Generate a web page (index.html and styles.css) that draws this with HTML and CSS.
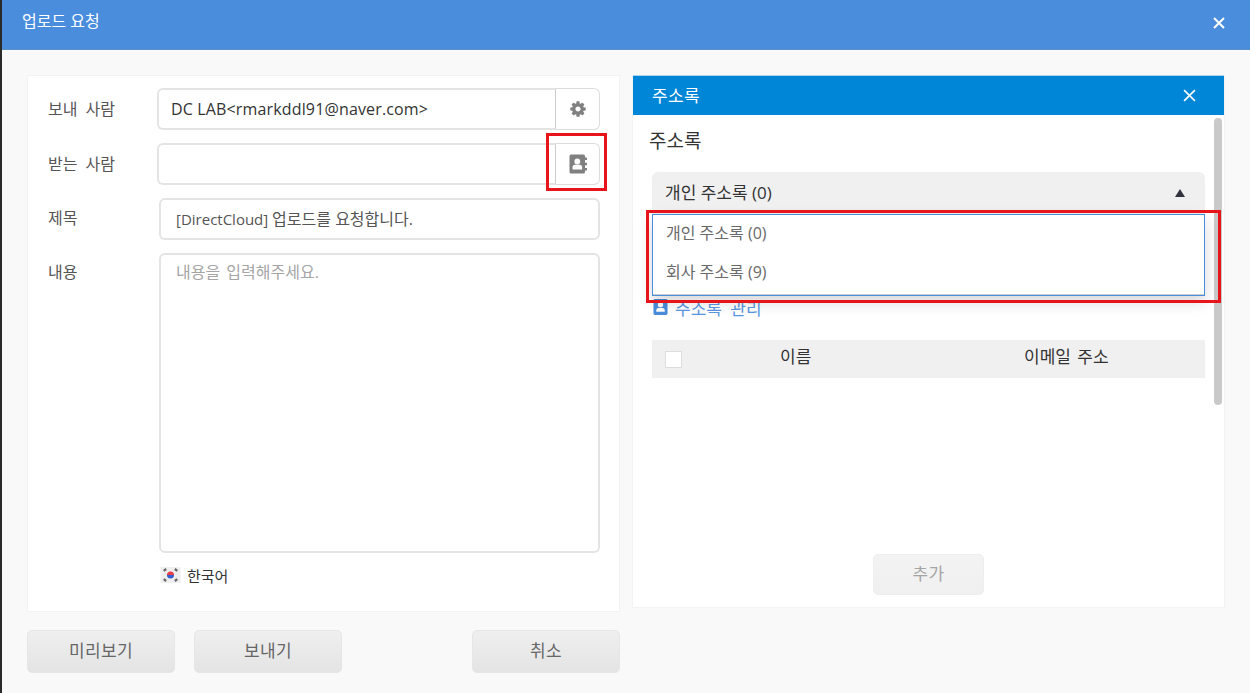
FILE: index.html
```html
<!DOCTYPE html>
<html lang="ko">
<head>
<meta charset="utf-8">
<title>업로드 요청</title>
<link rel="stylesheet" href="styles.css">
</head>
<body>
<div class="app">
  <header class="topbar">
    <span class="topbar-title">업로드 요청</span>
    <svg class="topbar-close" viewBox="0 0 12 12"><path d="M1 1L11 11M11 1L1 11"/></svg>
  </header>
  <main class="main">
    <div class="col-left">
      <section class="form-panel">
        <div class="row row-send">
          <label class="row-label">보내 사람</label>
          <div class="group">
            <div class="group-input">DC LAB&lt;rmarkddl91@naver.com&gt;</div>
            <div class="group-btn">
              <svg class="gear" viewBox="0 0 1792 1792"><path fill-rule="evenodd" d="M1152 896q0-106-75-181t-181-75-181 75-75 181 75 181 181 75 181-75 75-181zm512-109v222q0 12-8 23t-20 13l-185 28q-19 54-39 91 35 50 107 138 10 12 10 25t-9 23q-27 37-99 108t-94 71q-12 0-26-9l-138-108q-44 23-91 38-16 136-29 186-7 28-36 28h-222q-14 0-24.5-8.5t-11.5-21.5l-28-184q-49-16-90-37l-141 107q-10 9-25 9-14 0-25-11-126-114-165-168-7-10-7-23 0-12 8-23 15-21 51-66.5t54-70.5q-27-50-41-99l-183-27q-13-2-21-12.5t-8-23.5v-222q0-12 8-23t19-13l186-28q14-46 39-92-40-57-107-138-10-12-10-24 0-10 9-23 26-36 98.5-107.5t94.5-71.5q13 0 26 10l138 107q44-23 91-38 16-136 29-186 7-28 36-28h222q14 0 24.5 8.5t11.5 21.5l28 184q49 16 90 37l142-107q9-9 24-9 13 0 25 10 129 119 165 170 7 8 7 22 0 12-8 23-15 21-51 66.5t-54 70.5q26 50 41 98l183 28q13 2 21 12.5t8 23.5z"/></svg>
            </div>
          </div>
        </div>
        <div class="row row-recv">
          <label class="row-label">받는 사람</label>
          <div class="group">
            <div class="group-input"></div>
            <div class="group-btn">
              <svg class="book" viewBox="0 0 20 20"><path class="book-body" d="M3 0.5H15.5A1.5 1.5 0 0 1 17 2V18A1.5 1.5 0 0 1 15.5 19.5H3A1.5 1.5 0 0 1 1.500 18V2A1.500 1.500 0 0 1 3 0.500Z"/><path class="book-body" d="M16.500 3.500H19V6H16.500ZM16.500 8.700H19V11.200H16.500ZM16.500 14H19V16.500H16.500Z"/><circle class="book-person" cx="9.300" cy="7.500" r="2.900"/><path class="book-person" d="M4.500 15.500V13.500Q4.500 10.800 7 10.800H11.600Q14.100 10.800 14.100 13.500V15.500Z"/></svg>
            </div>
          </div>
        </div>
        <div class="row row-subject">
          <label class="row-label">제목</label>
          <div class="field">[DirectCloud] <span class="field-ko">업로드를 요청합니다.</span></div>
        </div>
        <div class="row row-body">
          <label class="row-label">내용</label>
          <div class="field field-area">내용을 입력해주세요.</div>
        </div>
        <div class="lang">
          <svg class="flag" viewBox="0 0 20 16">
            <rect width="20" height="16" fill="#efefef"/>
            <path d="M10 4.500A3.500 3.500 0 0 1 10 11.500Z" fill="#2f5fd0" transform="rotate(90 10 8)"/>
            <path d="M10 4.500A3.500 3.500 0 0 0 10 11.500Z" fill="#ee3c46" transform="rotate(90 10 8)"/>
            <path d="M3.200 3.800L5.700 2M14.300 2L16.800 3.800M3.200 12.200L5.700 14M14.300 14L16.800 12.200" stroke="#666" stroke-width="2.200"/>
          </svg>
          <span class="lang-name">한국어</span>
        </div>
      </section>
      <div class="actions">
        <button class="btn">미리보기</button>
        <button class="btn">보내기</button>
        <button class="btn btn-cancel">취소</button>
      </div>
    </div>
    <section class="book-panel">
      <div class="book-head">
        <span>주소록</span>
        <svg class="book-close" viewBox="0 0 12 12"><path d="M1 1L11 11M11 1L1 11"/></svg>
      </div>
      <div class="book-content">
        <h2 class="book-title">주소록</h2>
        <div class="select">
          <span>개인 주소록 (0)</span>
          <span class="caret"></span>
        </div>
        <div class="dropdown">
          <div class="dropdown-item">개인 주소록 (0)</div>
          <div class="dropdown-item">회사 주소록 (9)</div>
        </div>
        <a class="manage">
          <svg class="manage-icon" viewBox="0 0 16 18"><path d="M2 0.500H14A1.500 1.500 0 0 1 15.500 2V16A1.500 1.500 0 0 1 14 17.500H2A1.500 1.500 0 0 1 .5 16V2A1.500 1.500 0 0 1 2 .5Z" fill="#4a8ddc"/><circle cx="8" cy="6.500" r="2.800" fill="#fff"/><path d="M3.500 14V12.500Q3.500 10 6 10H10Q12.500 10 12.500 12.500V14Z" fill="#fff"/></svg>
          <span>주소록 관리</span>
        </a>
        <div class="table-head">
          <span class="check"></span>
          <span class="th th-name">이름</span>
          <span class="th th-mail">이메일 주소</span>
        </div>
        <div class="book-foot">
          <button class="btn btn-add">추가</button>
        </div>
      </div>
      <div class="scrollbar"></div>
    </section>
  </main>
  <div class="mark mark-btn"></div>
  <div class="mark mark-list"></div>
</div>
</body>
</html>
```

FILE: styles.css
```css
* { box-sizing: border-box; }
html, body { margin: 0; height: 100%; }
body {
  font-family: "Open Sans", "Noto Sans CJK KR", sans-serif;
  font-size: 16px;
  color: #333;
  background: #f9f9f9;
  overflow: hidden;
}
.app {
  position: relative;
  height: 693px;
  border-left: 2px solid #2a2a2a;
  display: flex;
  flex-direction: column;
}
.topbar {
  height: 50px;
  flex: none;
  background: #4a8ddc;
  border-bottom: 1px solid #5b8fca;
  color: #fff;
  display: flex;
  align-items: flex-start;
  justify-content: space-between;
  padding: 11px 25px 0 20px;
}
.topbar-title { font-size: 16px; line-height: 20px; }
.topbar-close { width: 12px; height: 12px; margin-top: 6px; }
.topbar-close path, .book-close path { stroke: #fff; stroke-width: 2; fill: none; }
.main {
  display: flex;
  gap: 12px;
  padding: 25px 25px 0;
  align-items: flex-start;
}
.col-left { width: 593px; flex: none; }
.form-panel {
  height: 537px;
  background: #fff;
  border: 1px solid #f3f3f3;
  padding: 12px 19px 0 20px;
  display: flex;
  flex-direction: column;
}
.row { display: flex; align-items: flex-start; }
.row-send, .row-recv { height: 42px; margin-bottom: 13px; }
.row-subject { height: 42px; margin-bottom: 13px; }
.row-body { height: 300px; }
.row-label {
  width: 109px;
  flex: none;
  color: #555;
  line-height: 42px;
  word-spacing: 4px;
}
.row-subject .row-label { width: 111px; line-height: 40px; }
.row-body .row-label { width: 111px; line-height: 38px; }
.group { flex: 1; display: flex; height: 42px; }
.group-input {
  flex: 1;
  border: 2px solid #e4e4e4;
  border-right: 1px solid #ccc;
  border-radius: 6px 0 0 6px;
  padding: 0 12px;
  line-height: 38px;
  color: #333;
  letter-spacing: .15px;
}
.group-btn {
  width: 44px;
  flex: none;
  border: 1px solid #dcdcdc;
  border-left: 0;
  border-radius: 0 6px 6px 0;
  display: flex;
  align-items: center;
  justify-content: center;
}
.gear { width: 18px; height: 18px; fill: #808080; margin-bottom: 1px; }
.book { width: 20px; height: 20px; }
.book-body { fill: #808080; }
.book-person { fill: #fff; }
.field {
  flex: 1;
  border: 2px solid #e4e4e4;
  border-radius: 6px;
  padding: 0 15px;
  font-size: 15px;
  line-height: 38px;
  color: #555;
}
.field-ko { font-size: 16px; }
.field-area {
  height: 300px;
  font-size: 16px;
  word-spacing: 2px;
  color: #a5a5a5;
  line-height: 34px;
}
.lang {
  display: flex;
  align-items: center;
  gap: 6px;
  margin-top: 13px;
  margin-left: 112px;
  height: 18px;
}
.flag { width: 21px; height: 16px; }
.lang-name { font-size: 15px; color: #333; }
.actions {
  display: flex;
  margin-top: 18px;
  gap: 19px;
}
.btn {
  width: 148px;
  height: 43px;
  font: inherit;
  font-size: 17px;
  letter-spacing: .3px;
  line-height: 39px;
  color: #666;
  background: linear-gradient(#efefef, #e4e4e4);
  border: 1px solid #e6e6e6;
  border-radius: 5px;
  padding: 0 0 2px;
}
.btn-cancel { margin-left: 111px; }
.book-panel {
  position: relative;
  width: 593px;
  height: 533px;
  background: #fff;
  border: 1px solid #f3f3f3;
  border-top: 0;
}
.book-head {
  height: 40px;
  background: #0086d6;
  border-top: 1px solid #a8d4ee;
  color: #fff;
  font-size: 17px;
  letter-spacing: .3px;
  display: flex;
  align-items: center;
  justify-content: space-between;
  padding: 0 28px 2px 19px;
}
.book-close { width: 13px; height: 13px; margin-top: 1px; }
.book-close path { stroke-width: 1.500; }
.book-content {
  position: relative;
  height: 492px;
  padding: 0 19px;
  display: flex;
  flex-direction: column;
}
.book-title {
  margin: 15px 0 0 -3px;
  font-size: 19px;
  font-weight: 400;
  line-height: 22px;
  color: #333;
}
.select {
  margin-top: 20px;
  height: 42px;
  font-size: 17px;
  background: #f0f0f0;
  border-radius: 6px 6px 0 0;
  padding: 0 20px 0 13px;
  display: flex;
  align-items: center;
  justify-content: space-between;
  line-height: 42px;
}
.caret {
  width: 0;
  height: 0;
  border-left: 5px solid transparent;
  border-right: 5px solid transparent;
  border-bottom: 8px solid #33333f;
}
.dropdown {
  position: absolute;
  left: 19px;
  right: 19px;
  top: 99px;
  height: 82px;
  background: #fff;
  border: 1px solid #4a8ddc;
  box-shadow: inset 0 -1px 0 #ccc, 0 6px 14px rgba(0, 0, 0, .16);
  z-index: 2;
}
.dropdown-item {
  height: 39px;
  line-height: 36px;
  padding-left: 13px;
  font-size: 16px;
  color: #6a6a6a;
}
.dropdown-item + .dropdown-item { line-height: 37px; }
.manage {
  display: flex;
  align-items: center;
  gap: 7px;
  margin-top: 83px;
  height: 20px;
  color: #5a97e2;
  font-size: 17px;
  word-spacing: 4px;
  padding-left: 1px;
}
.manage-icon { width: 15px; height: 18px; }
.table-head {
  margin-top: 23px;
  height: 38px;
  background: #f0f0f0;
  display: flex;
  align-items: center;
  position: relative;
}
.check {
  width: 17px;
  height: 17px;
  margin-left: 13px;
  background: #fff;
  border: 1px solid #ddd;
}
.th { position: absolute; font-size: 17px; line-height: 34px; top: 0; color: #333; }
.th-name { left: 128px; }
.th-mail { left: 372px; word-spacing: 2px; }
.book-foot {
  flex: 1;
  display: flex;
  justify-content: center;
  align-items: flex-end;
  padding-bottom: 12px;
}
.btn-add {
  width: 111px;
  height: 41px;
  line-height: 37px;
  color: #a5a5a5;
  background: linear-gradient(#f3f3f3, #f0f0f0);
  border-color: #eee;
}
.scrollbar {
  position: absolute;
  left: 581px;
  top: 43px;
  width: 8px;
  height: 287px;
  background: #c9c9c9;
  border-radius: 4px;
}
.mark {
  position: absolute;
  border: 3px solid #e8141c;
  pointer-events: none;
  z-index: 5;
}
.mark-btn { left: 544px; top: 133px; width: 61px; height: 58px; }
.mark-list { left: 644px; top: 210px; width: 575px; height: 93px; }
```
